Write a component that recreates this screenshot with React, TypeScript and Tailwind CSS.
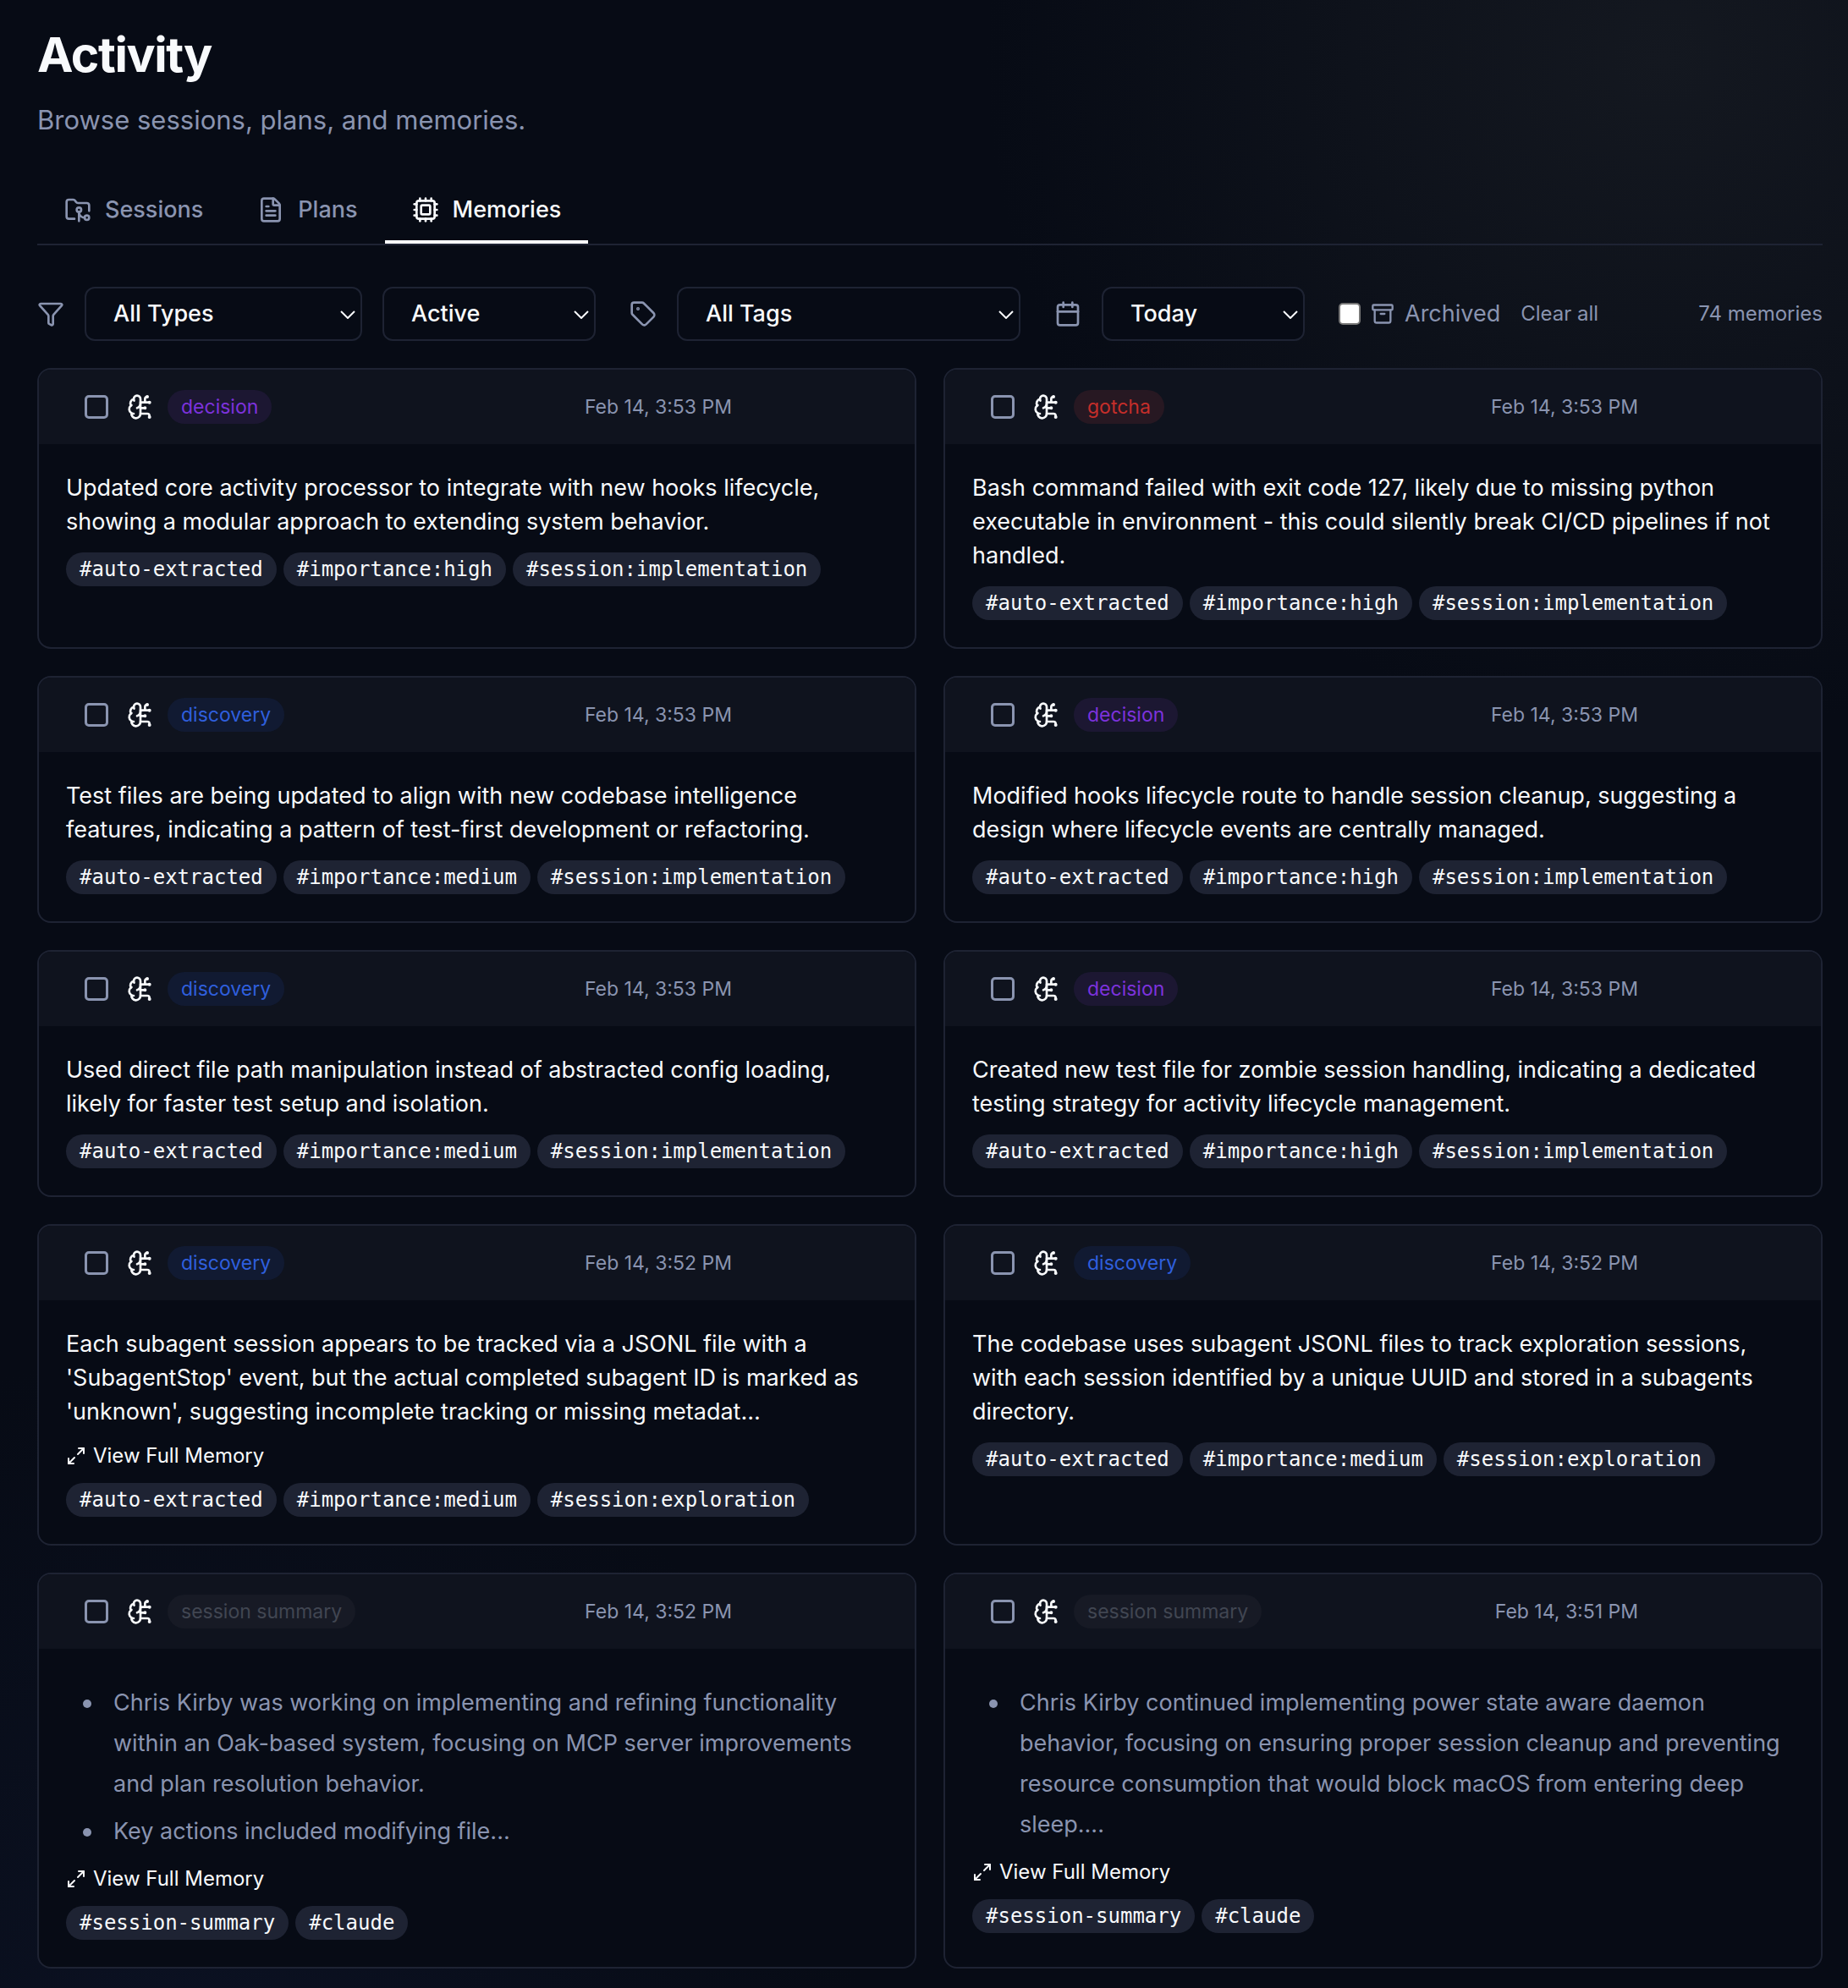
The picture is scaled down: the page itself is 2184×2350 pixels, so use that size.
import {
  Archive,
  BrainCircuit,
  Calendar,
  Cpu,
  FileText,
  Filter,
  FolderGit2,
  Maximize2,
  Tag,
  type LucideIcon,
} from 'lucide-react';
import clsx from 'clsx';

type MemoryType = 'decision' | 'gotcha' | 'discovery' | 'session summary';

interface Memory {
  id: number;
  type: MemoryType;
  date: string;
  text?: string;
  bullets?: string[];
  truncated?: boolean;
  tags: string[];
}

const TYPE_STYLES: Record<MemoryType, string> = {
  decision: 'bg-[#1c1732] text-[#7c32dc]',
  gotcha: 'bg-[#271822] text-[#c52e2a]',
  discovery: 'bg-[#111a32] text-[#2f5fdd]',
  'session summary': 'bg-[#171a25] text-[#414652]',
};

const MEMORIES: Memory[] = [
  {
    id: 1,
    type: 'decision',
    date: 'Feb 14, 3:53 PM',
    text: 'Updated core activity processor to integrate with new hooks lifecycle, showing a modular approach to extending system behavior.',
    tags: ['auto-extracted', 'importance:high', 'session:implementation'],
  },
  {
    id: 2,
    type: 'gotcha',
    date: 'Feb 14, 3:53 PM',
    text: 'Bash command failed with exit code 127, likely due to missing python executable in environment - this could silently break CI/CD pipelines if not handled.',
    tags: ['auto-extracted', 'importance:high', 'session:implementation'],
  },
  {
    id: 3,
    type: 'discovery',
    date: 'Feb 14, 3:53 PM',
    text: 'Test files are being updated to align with new codebase intelligence features, indicating a pattern of test-first development or refactoring.',
    tags: ['auto-extracted', 'importance:medium', 'session:implementation'],
  },
  {
    id: 4,
    type: 'decision',
    date: 'Feb 14, 3:53 PM',
    text: 'Modified hooks lifecycle route to handle session cleanup, suggesting a design where lifecycle events are centrally managed.',
    tags: ['auto-extracted', 'importance:high', 'session:implementation'],
  },
  {
    id: 5,
    type: 'discovery',
    date: 'Feb 14, 3:53 PM',
    text: 'Used direct file path manipulation instead of abstracted config loading, likely for faster test setup and isolation.',
    tags: ['auto-extracted', 'importance:medium', 'session:implementation'],
  },
  {
    id: 6,
    type: 'decision',
    date: 'Feb 14, 3:53 PM',
    text: 'Created new test file for zombie session handling, indicating a dedicated testing strategy for activity lifecycle management.',
    tags: ['auto-extracted', 'importance:high', 'session:implementation'],
  },
  {
    id: 7,
    type: 'discovery',
    date: 'Feb 14, 3:52 PM',
    text: "Each subagent session appears to be tracked via a JSONL file with a 'SubagentStop' event, but the actual completed subagent ID is marked as 'unknown', suggesting incomplete tracking or missing metadat...",
    truncated: true,
    tags: ['auto-extracted', 'importance:medium', 'session:exploration'],
  },
  {
    id: 8,
    type: 'discovery',
    date: 'Feb 14, 3:52 PM',
    text: 'The codebase uses subagent JSONL files to track exploration sessions, with each session identified by a unique UUID and stored in a subagents directory.',
    tags: ['auto-extracted', 'importance:medium', 'session:exploration'],
  },
  {
    id: 9,
    type: 'session summary',
    date: 'Feb 14, 3:52 PM',
    bullets: [
      'Chris Kirby was working on implementing and refining functionality within an Oak-based system, focusing on MCP server improvements and plan resolution behavior.',
      'Key actions included modifying file...',
    ],
    truncated: true,
    tags: ['session-summary', 'claude'],
  },
  {
    id: 10,
    type: 'session summary',
    date: 'Feb 14, 3:51 PM',
    bullets: [
      'Chris Kirby continued implementing power state aware daemon behavior, focusing on ensuring proper session cleanup and preventing resource consumption that would block macOS from entering deep sleep....',
    ],
    truncated: true,
    tags: ['session-summary', 'claude'],
  },
];

interface TabProps {
  icon: LucideIcon;
  label: string;
  active?: boolean;
}

const Tab = ({ icon: Icon, label, active }: TabProps) => (
  <button
    type="button"
    role="tab"
    aria-selected={!!active}
    className={clsx(
      'flex items-center gap-4 border-b-4 px-8 py-4 text-[27px] leading-10 font-medium',
      active ? 'border-[#f8fafc] text-[#f8fafc]' : 'border-transparent text-[#8a94b0]'
    )}
  >
    <Icon className="size-8" />
    {label}
  </button>
);

interface FilterSelectProps {
  label: string;
  options: string[];
  className: string;
}

const FilterSelect = ({ label, options, className }: FilterSelectProps) => (
  <div className={clsx('relative shrink-0', className)}>
    <select
      aria-label={label}
      className="h-16 w-full appearance-none rounded-xl border-2 border-[#1e2333] bg-[#070b15] px-8 text-[27px] font-medium text-[#f8fafc]"
    >
      {options.map((option) => (
        <option key={option}>{option}</option>
      ))}
    </select>
    <svg
      viewBox="0 0 18 10"
      className="pointer-events-none absolute top-7 right-2 h-2.5 w-[18px] fill-none stroke-[#f8fafc] stroke-2"
    >
      <path d="M1 1l8 8 8-8" />
    </svg>
  </div>
);

const MemoryCard = ({ memory }: { memory: Memory }) => (
  <article className="flex flex-col overflow-hidden rounded-2xl border-2 border-[#1e2333] bg-[#070b15]">
    <header className="flex h-[88px] items-center justify-between bg-[#0f131e] pr-[216px] pl-[54px]">
      <div className="flex items-center">
        <input
          type="checkbox"
          aria-label={`Select memory ${memory.id}`}
          className="size-7 appearance-none rounded-[5px] border-3 border-[#8a94b0]"
        />
        <BrainCircuit className="ml-[22px] size-8 text-[#f8fafc]" />
        <span
          className={clsx(
            'ml-4 rounded-full px-4 py-1 text-[23px] leading-8',
            TYPE_STYLES[memory.type]
          )}
        >
          {memory.type}
        </span>
      </div>
      <time className="text-[23px] leading-8 text-[#8a94b0]">{memory.date}</time>
    </header>

    <div className="flex flex-col items-start gap-4 p-8">
      {memory.text && <p className="text-[27px] leading-10 text-[#f8fafc]">{memory.text}</p>}
      {memory.bullets && (
        <ul className="space-y-2 pt-2 pl-5 text-[27px] leading-12 text-[#8a94b0]">
          {memory.bullets.map((bullet) => (
            <li
              key={bullet}
              className="flex gap-[26px] before:mt-5 before:size-2.5 before:shrink-0 before:rounded-full before:bg-[#8a94b0]"
            >
              {bullet}
            </li>
          ))}
        </ul>
      )}
      {memory.truncated && (
        <button type="button" className="flex items-center gap-2 text-[24px] leading-8 text-[#f8fafc]">
          <Maximize2 className="size-6" />
          View Full Memory
        </button>
      )}
      <div className="flex flex-wrap gap-2">
        {memory.tags.map((tag) => (
          <span
            key={tag}
            className="rounded-full bg-[#1e2333] px-4 py-1 font-['DejaVu_Sans_Mono',monospace] text-[24px] leading-8 text-[#f8fafc]"
          >
            #{tag}
          </span>
        ))}
      </div>
    </div>
  </article>
);

export default function App() {
  return (
    <div className="min-h-screen bg-[#070b15] bg-[radial-gradient(circle_at_90%_3%,#141820_0px,transparent_800px),radial-gradient(circle_at_10%_102%,#0b1122_0px,transparent_800px)] pt-7 pr-[30px] pb-6 pl-11 font-['Inter',sans-serif] text-[#f8fafc]">
      <h1 className="text-[57px] leading-[74px] font-bold tracking-tight">Activity</h1>
      <p className="mt-4 text-[31px] leading-12 text-[#8a94b0]">
        Browse sessions, plans, and memories.
      </p>

      <div role="tablist" className="mt-[46px] flex border-b-2 border-[#1e2333]">
        <Tab icon={FolderGit2} label="Sessions" />
        <Tab icon={FileText} label="Plans" />
        <Tab icon={Cpu} label="Memories" active />
      </div>

      <div className="mt-[49px] flex items-center gap-6 text-[#8a94b0]">
        <Filter className="size-8 shrink-0" />
        <FilterSelect label="Type" options={['All Types', 'Decision', 'Gotcha', 'Discovery']} className="w-[328px]" />
        <FilterSelect label="Status" options={['Active', 'Resolved']} className="w-[252px]" />
        <Tag className="ml-4 size-8 shrink-0" />
        <FilterSelect label="Tag" options={['All Tags']} className="w-[406px]" />
        <Calendar className="ml-4 size-8 shrink-0" />
        <FilterSelect label="Date range" options={['Today', 'This week']} className="w-[240px]" />
        <label className="ml-4 flex items-center gap-3 text-[27px] leading-10">
          <input
            type="checkbox"
            className="size-[26px] appearance-none rounded-[5px] border-2 border-[#767676] bg-white"
          />
          <Archive className="size-7" />
          Archived
        </label>
        <button type="button" className="text-[24px] leading-8">
          Clear all
        </button>
        <span className="ml-auto text-[24px] leading-8">74 memories</span>
      </div>

      <main className="mt-8 grid grid-cols-2 gap-8">
        {MEMORIES.map((memory) => (
          <MemoryCard key={memory.id} memory={memory} />
        ))}
      </main>
    </div>
  );
}
